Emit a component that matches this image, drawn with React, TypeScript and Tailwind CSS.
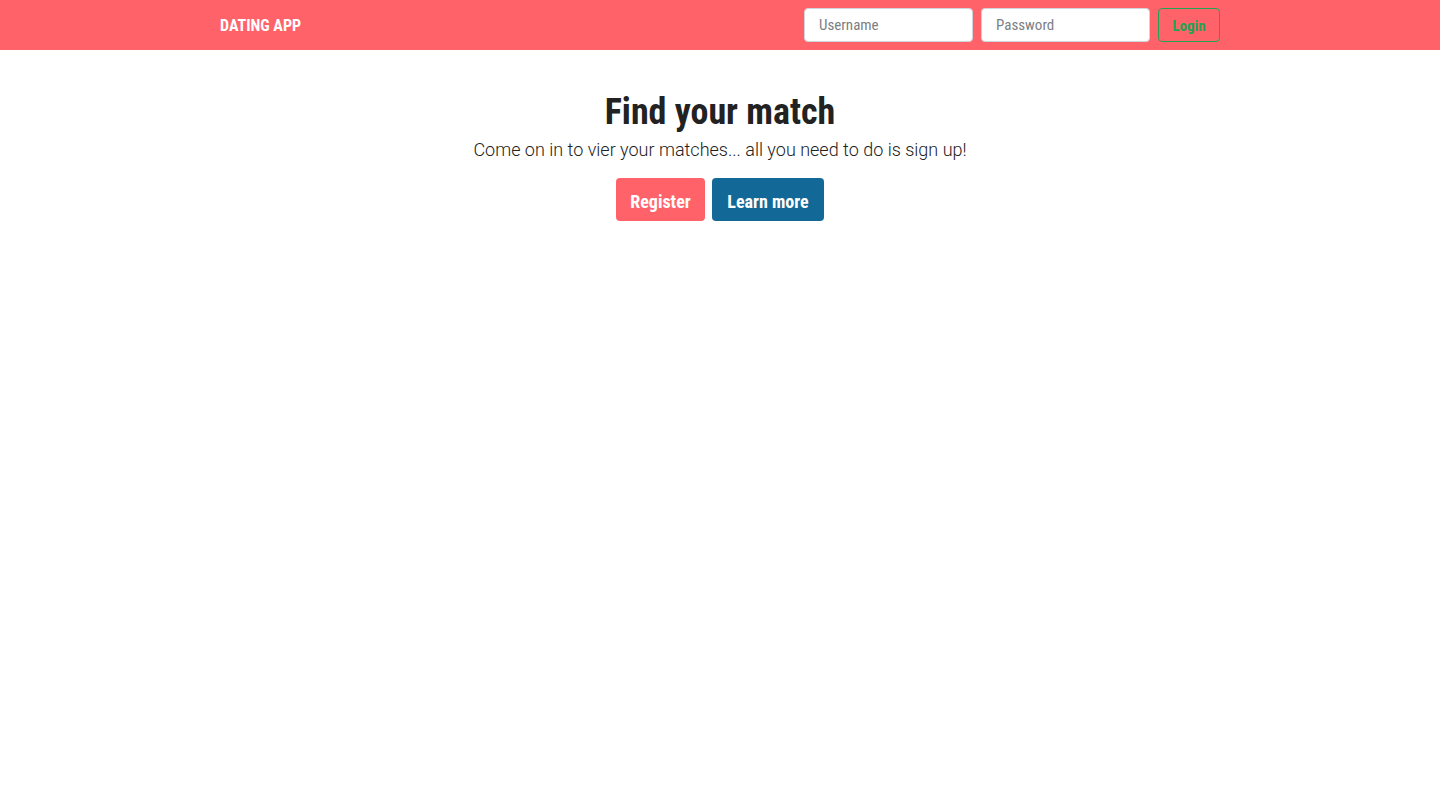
import React from "react";

export default function App() {
  return (
    <div className="min-h-[801px] bg-white">
      <nav className="h-[50px] bg-[#ff6369]">
        <div className="mx-auto flex h-full w-[1000px] items-center justify-between">
          <span className="pt-[2px] font-['Roboto_Condensed','Roboto',sans-serif] text-[16px] font-bold text-white">DATING APP</span>
          <form className="flex items-center gap-2" onSubmit={(e) => e.preventDefault()}>
            <input
              placeholder="Username"
              className="h-[34px] w-[169px] rounded-[4px] border border-[#ced4da] bg-white px-[14px] font-['Roboto_Condensed','Roboto',sans-serif] text-[15px] text-[#333] placeholder-[#7b7f84] outline-none"
            />
            <input
              type="password"
              placeholder="Password"
              className="h-[34px] w-[169px] rounded-[4px] border border-[#ced4da] bg-white px-[14px] font-['Roboto_Condensed','Roboto',sans-serif] text-[15px] text-[#333] placeholder-[#7b7f84] outline-none"
            />
            <button className="h-[34px] w-[62px] rounded-[4px] border border-[#1fa354] pt-[2px] font-['Roboto_Condensed','Roboto',sans-serif] text-[15px] font-bold text-[#1fa354]">
              Login
            </button>
          </form>
        </div>
      </nav>
      <main className="flex flex-col items-center pt-[40px]">
        <h1 className="font-['Roboto_Condensed','Roboto',sans-serif] text-[36px] font-bold leading-[44px] text-[#222]">
          Find your match
        </h1>
        <p className="mt-[2px] font-['Roboto','Liberation_Sans',sans-serif] text-[18px] font-light leading-[28px] text-[#222]">
          Come on in to vier your matches... all you need to do is sign up!
        </p>
        <div className="mt-[14px] flex gap-[7px]">
          <button className="h-[43px] w-[89px] rounded-[4px] bg-[#ff6369] pt-[3px] font-['Roboto_Condensed','Roboto',sans-serif] text-[18px] font-bold text-white">
            Register
          </button>
          <button className="h-[43px] w-[112px] rounded-[4px] bg-[#126896] pt-[3px] font-['Roboto_Condensed','Roboto',sans-serif] text-[18px] font-bold text-white">
            Learn more
          </button>
        </div>
      </main>
    </div>
  );
}
